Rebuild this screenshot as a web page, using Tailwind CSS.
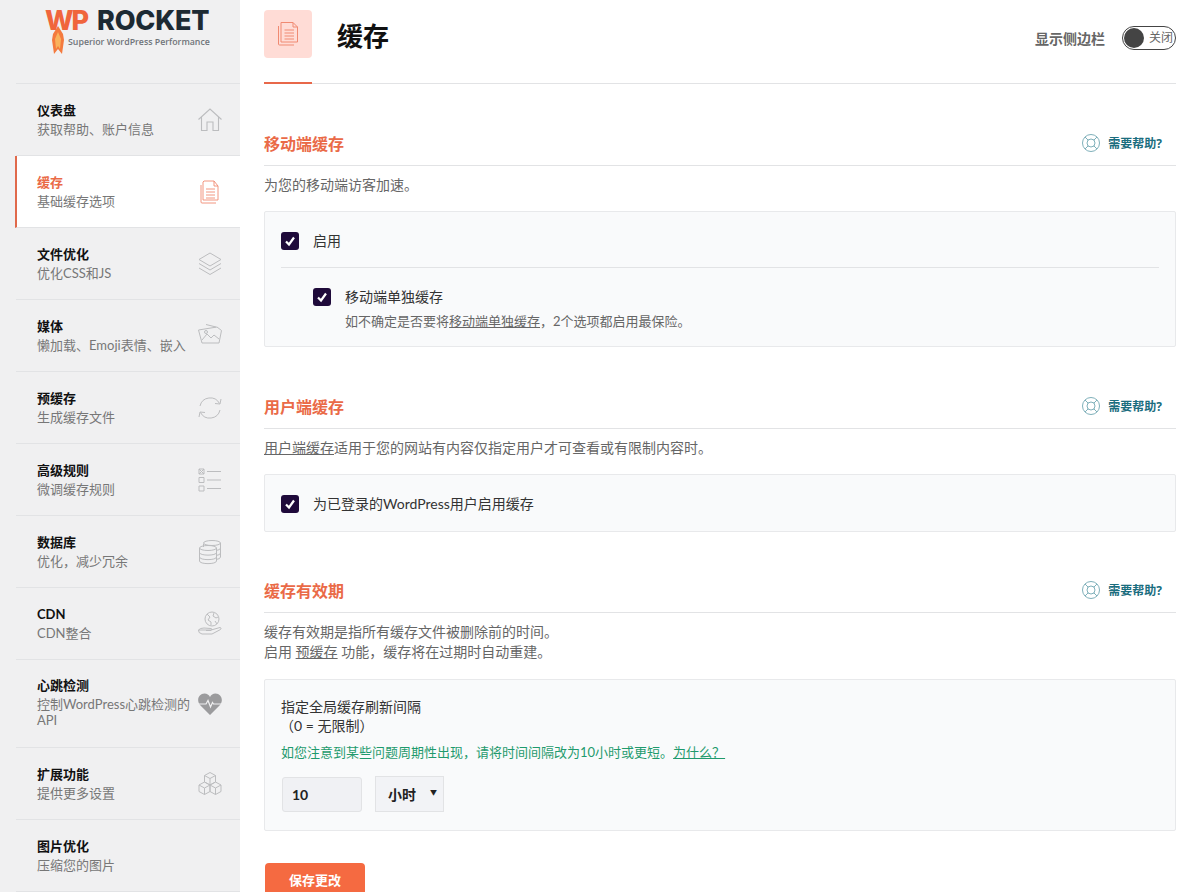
<!DOCTYPE html>
<html lang="zh-CN">
<head>
    <meta charset="UTF-8">
    <title>WP Rocket 缓存</title>
    <script src="https://cdn.jsdelivr.net/npm/@tailwindcss/browser@4"></script>
</head>
<body class="h-[892px] overflow-hidden bg-white font-['Lato','Noto_Sans_CJK_SC',sans-serif] text-[13px] text-[#666]">
<div class="flex h-[892px] overflow-hidden">

    <!-- Sidebar -->
    <aside class="w-[240px] shrink-0 bg-[#f0f0f1]">
        <!-- Logo -->
        <div class="relative h-[83px]">
            <div class="absolute left-[45px] top-[2px] flex items-baseline font-['Inter','Open_Sans',sans-serif] text-[27px] leading-[38px] font-extrabold">
                <span class="w-[52px] tracking-[-2px] text-[#f0653c]">WP</span>
                <span class="tracking-[-0.2px] text-[#1d2a33]">ROCKET</span>
            </div>
            <svg class="absolute left-[51px] top-[26px]" width="14" height="29" viewBox="0 0 14 29"><path d="M7 0 L12 8 L13 14 L11 28 L7 23 L3 28 L1 14 L2 8 Z" fill="#f47a3e"/><path d="M7 6 L10 13 L9 23 L7 20 L5 23 L4 13 Z" fill="#f9b25c"/></svg>
            <div class="absolute left-[68px] top-[36px] whitespace-nowrap font-['Open_Sans',sans-serif] text-[8.8px] leading-[12px] font-semibold text-[#6f7479]">Superior WordPress Performance</div>
        </div>

        <nav class="ml-4 border-t border-[#e2e3e5]">
            <div class="flex h-[72px] items-center justify-between border-b border-[#e2e3e5] pr-[17px] pl-[21px]">
                <div><div class="leading-[19px] font-bold text-[#111]">仪表盘</div><div class="leading-[18px] text-[#777]">获取帮助、账户信息</div></div>
                <svg width="26" height="26" viewBox="0 0 26 26" fill="none" stroke="#bcbdbf" stroke-width="1.1"><path d="M1.5 12.5 L13 2 L24.5 12.5 M4.5 10 V23.5 H10 V15 H16 V23.5 H21.5 V10"/></svg>
            </div>
            <div class="-ml-px flex h-[72px] items-center justify-between border-b border-l-2 border-[#e2e3e5] border-l-[#e0694b] bg-white pr-[17px] pl-[20px]">
                <div><div class="leading-[19px] font-bold text-[#ea6a47]">缓存</div><div class="leading-[18px] text-[#777]">基础缓存选项</div></div>
                <svg width="26" height="26" viewBox="0 0 26 26" fill="none" stroke="#f08a72" stroke-width="0.9"><path d="M6 3 V21 H21 V7 L17 2 H7 Z M17 2 V7 H21"/><path d="M4 6 V23 Q4 24 5 24 H19 M9 10 H18 M9 13 H18 M9 16 H18 M9 19 H18" /></svg>
            </div>
            <div class="flex h-[72px] items-center justify-between border-b border-[#e2e3e5] pr-[17px] pl-[21px]">
                <div><div class="leading-[19px] font-bold text-[#111]">文件优化</div><div class="leading-[18px] text-[#777]">优化CSS和JS</div></div>
                <svg width="26" height="26" viewBox="0 0 26 26" fill="none" stroke="#bcbdbf" stroke-width="1"><path d="M13 2 L24 8.5 L13 15 L2 8.5 Z M2 12.5 L13 19 L24 12.5 M2 17 L13 23.5 L24 17"/></svg>
            </div>
            <div class="flex h-[72px] items-center justify-between border-b border-[#e2e3e5] pr-[17px] pl-[21px]">
                <div><div class="leading-[19px] font-bold text-[#111]">媒体</div><div class="leading-[18px] text-[#777]">懒加载、Emoji表情、嵌入</div></div>
                <svg width="26" height="26" viewBox="0 0 26 26" fill="none" stroke="#bcbdbf" stroke-width="1"><path d="M1.5 7 L20 4 L24.5 7.5 L22 20 L5 20 Z"/><path d="M5 17 L10 11 L14 15 L17 12 L22 16 M9 1.5 L19 4"/><circle cx="9" cy="9" r="1.5"/></svg>
            </div>
            <div class="flex h-[72px] items-center justify-between border-b border-[#e2e3e5] pr-[17px] pl-[21px]">
                <div><div class="leading-[19px] font-bold text-[#111]">预缓存</div><div class="leading-[18px] text-[#777]">生成缓存文件</div></div>
                <svg width="26" height="26" viewBox="0 0 26 26" fill="none" stroke="#bcbdbf" stroke-width="1"><path d="M3 11 A10.5 10.5 0 0 1 22.5 8.5 M24 4 L23 9 L18 8.5 M23 15 A10.5 10.5 0 0 1 3.5 17.5 M2 22 L3 17 L8 17.5"/></svg>
            </div>
            <div class="flex h-[72px] items-center justify-between border-b border-[#e2e3e5] pr-[17px] pl-[21px]">
                <div><div class="leading-[19px] font-bold text-[#111]">高级规则</div><div class="leading-[18px] text-[#777]">微调缓存规则</div></div>
                <svg width="26" height="26" viewBox="0 0 26 26" fill="none" stroke="#bcbdbf" stroke-width="1"><path d="M2 2 H7 V7 H2 Z M2 2 L7 7 M7 2 L2 7 M2 10.5 H7 V15.5 H2 Z M2 19 H7 V24 H2 Z M10 4.5 H24 M10 13 H24 M10 21.5 H24"/></svg>
            </div>
            <div class="flex h-[72px] items-center justify-between border-b border-[#e2e3e5] pr-[17px] pl-[21px]">
                <div><div class="leading-[19px] font-bold text-[#111]">数据库</div><div class="leading-[18px] text-[#777]">优化，减少冗余</div></div>
                <svg width="26" height="26" viewBox="0 0 26 26" fill="none" stroke="#bcbdbf" stroke-width="1"><ellipse cx="15" cy="4" rx="8.5" ry="2.5"/><path d="M23.5 4 V18 Q23.5 20 19 20.5 M6.5 5 V8 M23.5 9 Q23.5 11 19 11.5 M23.5 14 Q23.5 16 19 16.5"/><ellipse cx="11" cy="9" rx="8.5" ry="2.5"/><path d="M2.5 9 V22 C2.5 25.5 19.5 25.5 19.5 22 V9 M2.5 13.5 C2.5 17 19.5 17 19.5 13.5 M2.5 18 C2.5 21.5 19.5 21.5 19.5 18"/></svg>
            </div>
            <div class="flex h-[72px] items-center justify-between border-b border-[#e2e3e5] pr-[17px] pl-[21px]">
                <div><div class="leading-[19px] font-bold text-[#111]">CDN</div><div class="leading-[18px] text-[#777]">CDN整合</div></div>
                <svg width="26" height="26" viewBox="0 0 26 26" fill="none" stroke="#bcbdbf" stroke-width="1"><circle cx="15" cy="8" r="7"/><path d="M10 3 L13 6 L11 9 L14 11 L14 14 M17 2 L16 5 L19 7 L21 6 M18 10 L20 13"/><path d="M1.5 19 Q3 17 7 17 L14 17.5 Q16 18 14 19.5 L9 19.5 M14 19 L23 16.5 Q25 17 23.5 18.5 L15 23 L5 23 Q1 22 1.5 19 Z"/></svg>
            </div>
            <div class="flex h-[88px] items-center justify-between border-b border-[#e2e3e5] pr-[17px] pl-[21px]">
                <div class="w-[156px] pb-[3px]"><div class="leading-[19px] font-bold text-[#111]">心跳检测</div><div class="mt-px leading-[16px] text-[#777]">控制WordPress心跳检测的API</div></div>
                <svg width="26" height="26" viewBox="0 0 26 26"><path d="M13 24 L3 14 C-1 9 2 2.5 7.5 2.5 C10 2.5 12 4 13 6 C14 4 16 2.5 18.5 2.5 C24 2.5 27 9 23 14 Z" fill="#9b9b9d"/><path d="M1 13 H9 L11 9.5 L13.5 16 L15.5 11.5 L16.5 13 H25" fill="none" stroke="#f0f0f1" stroke-width="1.2"/></svg>
            </div>
            <div class="flex h-[72px] items-center justify-between border-b border-[#e2e3e5] pr-[17px] pl-[21px]">
                <div><div class="leading-[19px] font-bold text-[#111]">扩展功能</div><div class="leading-[18px] text-[#777]">提供更多设置</div></div>
                <svg width="26" height="26" viewBox="0 0 26 26" fill="none" stroke="#bcbdbf" stroke-width="1"><path d="M13 1.5 L18.5 4.5 V11 L13 14 L7.5 11 V4.5 Z M7.5 4.5 L13 7.5 L18.5 4.5 M13 7.5 V14"/><path d="M7.5 11 L13 14 V20.5 L7.5 23.5 L2 20.5 V14 Z M2 14 L7.5 17 L13 14 M7.5 17 V23.5"/><path d="M18.5 11 L24 14 V20.5 L18.5 23.5 L13 20.5 V14 Z M13 14 L18.5 17 L24 14 M18.5 17 V23.5"/></svg>
            </div>
            <div class="flex h-[72px] items-center justify-between border-b border-[#e2e3e5] pr-[17px] pl-[21px]">
                <div><div class="leading-[19px] font-bold text-[#111]">图片优化</div><div class="leading-[18px] text-[#777]">压缩您的图片</div></div>
            </div>
        </nav>
    </aside>

    <!-- Main -->
    <main class="w-[912px] shrink-0 pl-6">
        <div class="w-[912px]">
            <!-- Page header -->
            <header class="relative flex h-[84px] items-center justify-between border-b border-[#e2e3e5] pb-[15px]">
                <div class="flex items-center">
                    <div class="flex h-12 w-12 items-center justify-center rounded-[4px] bg-[#ffdcd6]">
                        <svg width="26" height="28" viewBox="0 0 26 28" fill="none" stroke="#f08a72" stroke-width="1"><path d="M6 2.5 V22 H22.5 V7 L18 2.5 Z M18 2.5 V7 H22.5"/><path d="M3.5 6 V24 Q3.5 25 4.5 25 H19 M9.5 10 H19 M9.5 13 H19 M9.5 16 H19 M9.5 19 H19"/></svg>
                    </div>
                    <h1 class="mt-1 ml-[25px] text-[26px] leading-8 font-bold text-[#111]">缓存</h1>
                </div>
                <div class="mt-2 flex items-center">
                    <span class="text-[14px] font-semibold text-[#666]">显示侧边栏</span>
                    <div class="ml-[17px] flex h-6 w-[54px] items-center rounded-full border border-[#444] pl-px">
                        <div class="h-5 w-5 rounded-full bg-[#444]"></div>
                        <span class="ml-[5px] text-[12px] text-[#666]">关闭</span>
                    </div>
                </div>
                <div class="absolute bottom-[-1px] left-0 h-[2px] w-12 bg-[#e8684a]"></div>
            </header>

            <!-- 移动端缓存 -->
            <div class="mt-[42px] flex h-10 items-center justify-between border-b border-[#e2e3e5] pb-[3px]">
                <h2 class="text-[16px] font-bold text-[#ea6a47]">移动端缓存</h2>
                <div class="flex items-center pr-[14px]">
                    <svg class="mb-[2px]" width="18" height="18" viewBox="0 0 18 18" fill="none" stroke="#7fb0ba" stroke-width="1"><circle cx="9" cy="9" r="8.5"/><circle cx="9" cy="9" r="4"/><path d="M3 3 L6.2 6.2 M15 3 L11.8 6.2 M3 15 L6.2 11.8 M15 15 L11.8 11.8"/></svg>
                    <span class="ml-2 font-['Open_Sans','Noto_Sans_CJK_SC',sans-serif] text-[12px] font-bold text-[#1a6d7e]">需要帮助?</span>
                </div>
            </div>
            <p class="mt-[9px] text-[14px] leading-5">为您的移动端访客加速。</p>
            <div class="mt-4 rounded-[2px] border border-[#e8e9eb] bg-[#f9fafb] px-4 pt-[19px] pb-[15px]">
                <div class="flex items-center">
                    <span class="flex h-[18px] w-[18px] items-center justify-center rounded-[3px] bg-[#1f0a3a]"><svg width="12" height="12" viewBox="0 0 12 12" fill="none" stroke="#fff" stroke-width="2.2"><path d="M2 6.5 L5 9.5 L10 2.5"/></svg></span>
                    <span class="ml-[14px] text-[14px] leading-5 text-[#333]">启用</span>
                </div>
                <div class="mt-[16px] border-t border-[#e2e3e5] pt-[19px] pl-8">
                    <div class="flex items-center">
                        <span class="flex h-[18px] w-[18px] items-center justify-center rounded-[3px] bg-[#1f0a3a]"><svg width="12" height="12" viewBox="0 0 12 12" fill="none" stroke="#fff" stroke-width="2.2"><path d="M2 6.5 L5 9.5 L10 2.5"/></svg></span>
                        <span class="ml-[14px] text-[14px] leading-5 text-[#333]">移动端单独缓存</span>
                    </div>
                    <p class="mt-1 pl-8 leading-5">如不确定是否要将<span class="underline">移动端单独缓存</span>，2个选项都启用最保险。</p>
                </div>
            </div>

            <!-- 用户端缓存 -->
            <div class="mt-[42px] flex h-10 items-center justify-between border-b border-[#e2e3e5] pb-[3px]">
                <h2 class="text-[16px] font-bold text-[#ea6a47]">用户端缓存</h2>
                <div class="flex items-center pr-[14px]">
                    <svg class="mb-[2px]" width="18" height="18" viewBox="0 0 18 18" fill="none" stroke="#7fb0ba" stroke-width="1"><circle cx="9" cy="9" r="8.5"/><circle cx="9" cy="9" r="4"/><path d="M3 3 L6.2 6.2 M15 3 L11.8 6.2 M3 15 L6.2 11.8 M15 15 L11.8 11.8"/></svg>
                    <span class="ml-2 font-['Open_Sans','Noto_Sans_CJK_SC',sans-serif] text-[12px] font-bold text-[#1a6d7e]">需要帮助?</span>
                </div>
            </div>
            <p class="mt-[9px] text-[14px] leading-5"><span class="underline">用户端缓存</span>适用于您的网站有内容仅指定用户才可查看或有限制内容时。</p>
            <div class="mt-4 flex h-[58px] items-center rounded-[2px] border border-[#e8e9eb] bg-[#f9fafb] px-4 pt-px">
                <span class="flex h-[18px] w-[18px] items-center justify-center rounded-[3px] bg-[#1f0a3a]"><svg width="12" height="12" viewBox="0 0 12 12" fill="none" stroke="#fff" stroke-width="2.2"><path d="M2 6.5 L5 9.5 L10 2.5"/></svg></span>
                <span class="ml-[14px] text-[14px] leading-5 text-[#333]">为已登录的WordPress用户启用缓存</span>
            </div>

            <!-- 缓存有效期 -->
            <div class="mt-[41px] flex h-10 items-center justify-between border-b border-[#e2e3e5] pb-[3px]">
                <h2 class="text-[16px] font-bold text-[#ea6a47]">缓存有效期</h2>
                <div class="flex items-center pr-[14px]">
                    <svg class="mb-[2px]" width="18" height="18" viewBox="0 0 18 18" fill="none" stroke="#7fb0ba" stroke-width="1"><circle cx="9" cy="9" r="8.5"/><circle cx="9" cy="9" r="4"/><path d="M3 3 L6.2 6.2 M15 3 L11.8 6.2 M3 15 L6.2 11.8 M15 15 L11.8 11.8"/></svg>
                    <span class="ml-2 font-['Open_Sans','Noto_Sans_CJK_SC',sans-serif] text-[12px] font-bold text-[#1a6d7e]">需要帮助?</span>
                </div>
            </div>
            <p class="mt-[9px] text-[14px] leading-5">缓存有效期是指所有缓存文件被删除前的时间。<br>启用 <span class="underline">预缓存</span> 功能，缓存将在过期时自动重建。</p>
            <div class="mt-[17px] h-[152px] rounded-[2px] border border-[#e8e9eb] bg-[#f9fafb] px-4 pt-[17px]">
                <p class="text-[14px] leading-[19px] text-[#333]">指定全局缓存刷新间隔<br><span class="ml-[-1px]">（0 = 无限制）</span></p>
                <p class="mt-[7px] leading-5 text-[#1f9a6d]">如您注意到某些问题周期性出现，请将时间间隔改为10小时或更短。<span class="underline">为什么？</span></p>
                <div class="mt-[14px] flex items-center">
                    <div class="ml-px flex h-[35px] w-20 items-center rounded-[3px] border border-[#e2e3e5] bg-[#f0f1f4] pl-[9px] text-[14px] font-bold text-[#222]">10</div>
                    <div class="relative ml-[13px] flex h-9 w-[69px] items-center border border-[#e2e3e5] bg-[#f2f3f6] pl-3 text-[14px] font-bold text-[#222]">小时<span class="absolute top-[9px] right-[6px] text-[7px] leading-3 text-[#222]">▼</span></div>
                </div>
            </div>
            <button class="mt-8 ml-px h-9 w-[100px] rounded-[4px] bg-[#f56a41] font-bold text-white">保存更改</button>
        </div>
    </main>
</div>
</body>
</html>
